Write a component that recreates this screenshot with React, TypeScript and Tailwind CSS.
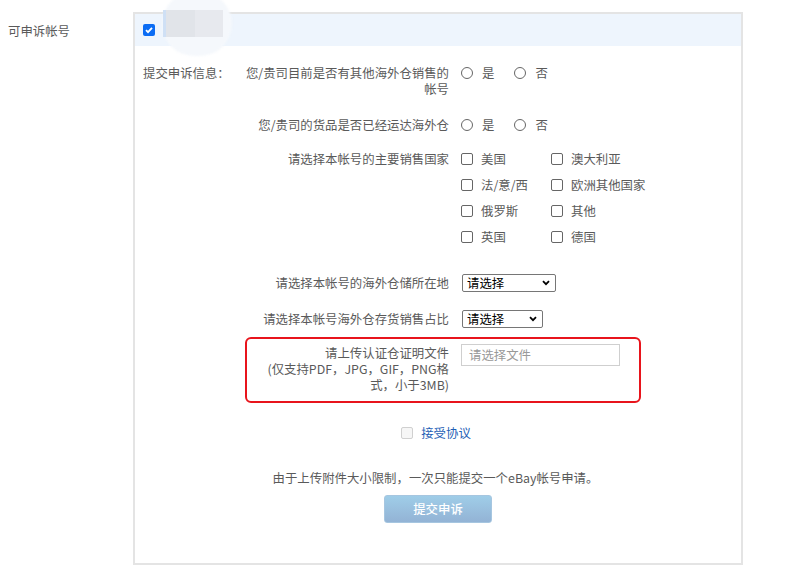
import React from "react";

const Radio = ({ label }: { label: string }) => (
  <label className="flex items-center gap-[9px]">
    <input type="radio" name="x" className="appearance-none shrink-0 m-0 w-[12px] h-[12px] rounded-full border border-[#666] bg-white" />
    <span>{label}</span>
  </label>
);

const Check = ({ label }: { label: string }) => (
  <label className="flex items-center gap-[8px] w-[90px] shrink-0">
    <input type="checkbox" className="appearance-none shrink-0 m-0 w-[12px] h-[12px] rounded-[2px] border border-[#666] bg-white" />
    <span className="whitespace-nowrap">{label}</span>
  </label>
);

const Select = ({ w }: { w: string }) => (
  <div className={`${w} ml-[1px] h-[18px] border border-[#767676] rounded-[2px] flex items-center justify-between pl-[4px] pr-[5px] text-black bg-white`}>
    <span>请选择</span>
    <svg width="8" height="6" viewBox="0 0 8 6">
      <path d="M1 1.2l3 3 3-3" fill="none" stroke="#000" strokeWidth="1.8" />
    </svg>
  </div>
);

export default function App() {
  return (
    <div
      className="relative w-[795px] h-[568px] bg-white text-[#5a5a5a] text-[12.4px] leading-[16px] overflow-hidden"
      style={{ fontFamily: '"Noto Sans CJK SC", "Noto Sans", sans-serif' }}
    >
      <div className="flex">
        <div className="w-[133px] pl-[8px] pt-[23px]">可申诉帐号</div>
        <div className="mt-[12px] w-[610px] h-[553px] border-2 border-[#e4e4e4] flex flex-col">
          <div className="h-[32px] bg-[#eef5fd] flex items-center pl-[8px]">
            <span className="w-[12px] h-[12px] rounded-[2px] bg-[#0b6cf4] flex items-center justify-center">
              <svg width="10" height="10" viewBox="0 0 10 10">
                <path d="M2 5.2l2 2 4-4.4" fill="none" stroke="#fff" strokeWidth="1.8" />
              </svg>
            </span>
          </div>

          <div className="pl-[8px] pt-[19px] flex">
            <div className="w-[100px] whitespace-nowrap">提交申诉信息：</div>
            <div className="flex flex-col">
              <div className="flex">
                <div className="w-[206px] text-right">
                  您/贵司目前是否有其他海外仓销售的
                  <br />
                  帐号
                </div>
                <div className="ml-[12px] flex gap-[20px] h-[16px]">
                  <Radio label="是" />
                  <Radio label="否" />
                </div>
              </div>
              <div className="flex mt-[20px]">
                <div className="w-[206px] text-right whitespace-nowrap">您/贵司的货品是否已经运达海外仓</div>
                <div className="ml-[12px] flex gap-[20px] h-[16px]">
                  <Radio label="是" />
                  <Radio label="否" />
                </div>
              </div>
              <div className="flex mt-[18px]">
                <div className="w-[206px] text-right whitespace-nowrap">请选择本帐号的主要销售国家</div>
                <div className="ml-[12px] flex flex-col gap-[10px]">
                  <div className="flex h-[16px]">
                    <Check label="美国" />
                    <Check label="澳大利亚" />
                  </div>
                  <div className="flex h-[16px]">
                    <Check label="法/意/西" />
                    <Check label="欧洲其他国家" />
                  </div>
                  <div className="flex h-[16px]">
                    <Check label="俄罗斯" />
                    <Check label="其他" />
                  </div>
                  <div className="flex h-[16px]">
                    <Check label="英国" />
                    <Check label="德国" />
                  </div>
                </div>
              </div>
              <div className="flex items-center mt-[29px]">
                <div className="w-[206px] text-right whitespace-nowrap">请选择本帐号的海外仓储所在地</div>
                <div className="ml-[12px]">
                  <Select w="w-[94px]" />
                </div>
              </div>
              <div className="flex items-center mt-[18px]">
                <div className="w-[206px] text-right whitespace-nowrap">请选择本帐号海外仓存货销售占比</div>
                <div className="ml-[12px]">
                  <Select w="w-[81px]" />
                </div>
              </div>
            </div>
          </div>

          <div className="ml-[110px] mt-[9px] w-[396px] h-[66px] border-2 border-[#e8141c] rounded-[6px] flex items-start pt-[6px]">
            <div className="w-[202px] text-right whitespace-nowrap">
              请上传认证仓证明文件
              <br />
              (仅支持PDF，JPG，GIF，PNG格
              <br />
              式，小于3MB)
            </div>
            <div className="ml-[12px] -mt-[1px] w-[159px] h-[22px] border border-[#cfcfcf] flex items-center pl-[7px] text-[#999] bg-white">
              请选择文件
            </div>
          </div>

          <div className="mt-[22px] flex justify-center items-center gap-[8px] pr-[4px]">
            <span className="w-[12px] h-[12px] rounded-[2px] border border-[#d0d0d0] bg-[#f6f6f6]" />
            <span className="text-[#1f5fb6]">接受协议</span>
          </div>

          <div className="mt-[29px] text-center pr-[5px]">由于上传附件大小限制，一次只能提交一个eBay帐号申请。</div>

          <div className="mt-[9px] flex justify-center">
            <button className="w-[108px] h-[28px] rounded-[3px] border border-[#a6c6e0] bg-gradient-to-b from-[#9fcde8] to-[#93b3d5] text-white text-[12.4px] font-medium">
              提交申诉
            </button>
          </div>
        </div>
      </div>

      <div className="absolute left-[162px] top-[-8px] w-[70px] h-[64px] rounded-full bg-[#f5f8fc] blur-[1px]" />
      <div className="absolute left-[163px] top-[10px] w-[3px] h-[27px] bg-[#cfe0f5]" />
      <div className="absolute left-[166px] top-[10px] w-[29px] h-[27px] bg-[#e1e4e9]" />
      <div className="absolute left-[195px] top-[10px] w-[28px] h-[27px] bg-[#e7e9ee]" />
    </div>
  );
}
